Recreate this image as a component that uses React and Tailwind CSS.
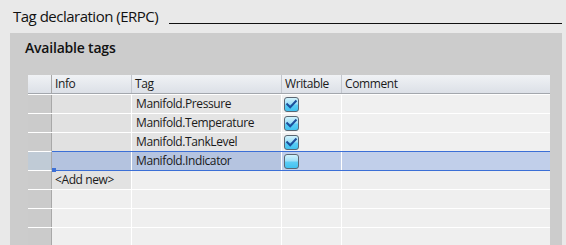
import React from "react";

function Check({ checked }) {
  return (
    <svg width="15" height="15" viewBox="0 0 15 15" className="block">
      <defs>
        <linearGradient id={checked ? "gc" : "gu"} x1="0" y1="0" x2="0" y2="1">
          <stop offset="0" stopColor="#d6f4fd" />
          <stop offset="0.45" stopColor="#9fe0f8" />
          <stop offset="0.55" stopColor="#5ccdf5" />
          <stop offset="1" stopColor="#3fc1f0" />
        </linearGradient>
      </defs>
      <rect x="0.5" y="0.5" width="14" height="14" rx="2.5" fill={`url(#${checked ? "gc" : "gu"})`} stroke="#5b6773" />
      {checked && (
        <path d="M3.2 7.2 L6.2 10.2 L11.8 4.2" fill="none" stroke="#1c4f9c" strokeWidth="2" strokeLinecap="square" />
      )}
    </svg>
  );
}

const rows = [
  { tag: "Manifold.Pressure", checked: true },
  { tag: "Manifold.Temperature", checked: true },
  { tag: "Manifold.TankLevel", checked: true },
];

export default function App() {
  const font = { fontFamily: '"Open Sans", "Noto Sans", sans-serif' };
  return (
    <div className="w-[566px] h-[245px] bg-[#e9e9e9] overflow-hidden text-[#1a1a1a]" style={font}>
      <div className="flex items-end h-[33px] pl-[13px] pr-[4px] pb-[8px]">
        <span className="text-[15px] leading-[18px] whitespace-nowrap tracking-[-0.5px] text-[#111]">Tag declaration (ERPC)</span>
        <div className="flex-1 ml-[11px] border-b border-[#111] mb-[1px]" />
      </div>
      <div className="ml-[10px] w-[552px] h-[212px] bg-[#cccccc] pt-[6px]">
        <div className="pl-[15px] text-[14px] leading-[18px] font-semibold tracking-[-0.2px] h-[36px] text-[#111]">Available tags</div>
        <div className="ml-[18px] w-[522px] text-[12px] leading-[18px] tracking-[-0.4px]">
          {/* header */}
          <div className="flex h-[19px] border-b border-[#a3a7ad] bg-gradient-to-b from-[#f0f2f5] to-[#dce0e7]">
            <div className="w-[24px] border-r border-[#a8a8a8]" />
            <div className="w-[80px] border-r border-[#c3c7ce] pl-[3px]">Info</div>
            <div className="w-[150px] border-r border-[#c3c7ce] pl-[3px]">Tag</div>
            <div className="w-[60px] border-r border-[#c3c7ce] pl-[3px]">Writable</div>
            <div className="w-[208px] pl-[3px]">Comment</div>
          </div>
          {rows.map((r) => (
            <div key={r.tag} className="flex h-[19px] border-t border-white">
              <div className="w-[24px] border-r border-[#a8a8a8] bg-[#cbcbcb]" />
              <div className="w-[80px] border-r border-white bg-[#e1e1e1]" />
              <div className="w-[150px] border-r border-white bg-[#e4e4e4] pl-[4px]">{r.tag}</div>
              <div className="w-[60px] border-r border-white bg-[#f0f0f0] pl-[2px] pt-[2px]">
                <Check checked={r.checked} />
              </div>
              <div className="w-[208px] bg-[#f0f0f0]" />
            </div>
          ))}
          {/* selected row */}
          <div className="flex h-[20px]">
            <div className="w-[24px] border-r border-[#a8a8a8] border-y border-y-white bg-[#c0cbd6]" />
            <div className="relative flex flex-1 border-y border-[#3b6fd6]">
              <div className="w-[80px] border-r border-white bg-[#b4c3df]" />
              <div className="w-[150px] border-r border-white bg-[#b5c4e0] pl-[4px]">Manifold.Indicator</div>
              <div className="w-[60px] border-r border-white bg-[#c1cfea] pl-[2px] pt-[2px]">
                <Check checked={false} />
              </div>
              <div className="w-[208px] bg-[#c1cfea]" />
              <div className="absolute left-0 bottom-[-2px] w-[4px] h-[4px] bg-[#3b6fd6]" />
            </div>
          </div>
          {/* add new */}
          <div className="flex h-[18px]">
            <div className="w-[24px] border-r border-[#a8a8a8] bg-[#cbcbcb]" />
            <div className="w-[80px] border-r border-white bg-[#e2e2e2] pl-[3px]">&lt;Add new&gt;</div>
            <div className="w-[150px] border-r border-white bg-[#efefef]" />
            <div className="w-[60px] border-r border-white bg-[#efefef]" />
            <div className="w-[208px] bg-[#efefef]" />
          </div>
          {[0, 1, 2].map((i) => (
            <div key={i} className="flex h-[19px] border-t border-white">
              <div className="w-[24px] border-r border-[#a8a8a8] bg-[#cbcbcb]" />
              <div className="w-[80px] border-r border-white bg-[#efefef]" />
              <div className="w-[150px] border-r border-white bg-[#efefef]" />
              <div className="w-[60px] border-r border-white bg-[#efefef]" />
              <div className="w-[208px] bg-[#efefef]" />
            </div>
          ))}
        </div>
      </div>
    </div>
  );
}
